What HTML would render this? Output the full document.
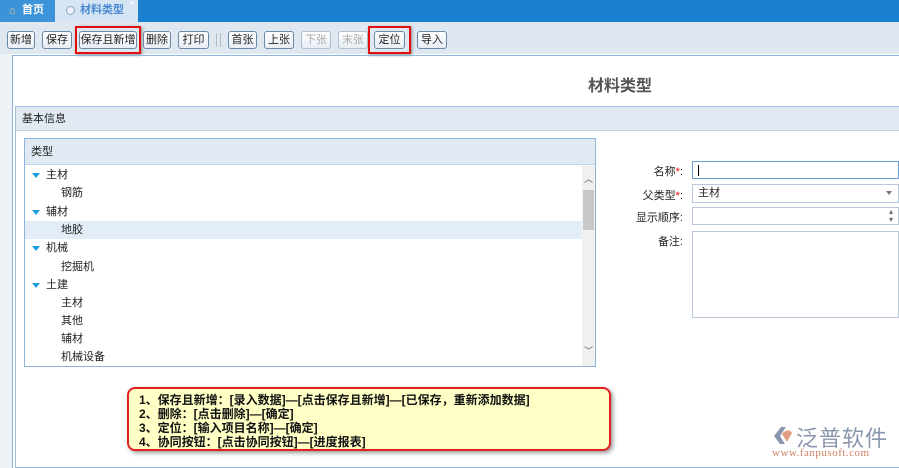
<!DOCTYPE html>
<html><head><meta charset="utf-8"><style>
*{margin:0;padding:0;box-sizing:border-box}
body{width:899px;height:468px;overflow:hidden;background:#fff;font-family:"Liberation Sans","Noto Sans CJK SC",sans-serif;font-size:11px;color:#222;position:relative}
.a{position:absolute}
.tabbar{left:0;top:0;width:899px;height:22px;background:#1a7fcf}
.btn{position:absolute;top:31px;height:18px;border:1px solid #6a8aa8;border-radius:3px;background:linear-gradient(#fff,#e6eef6);font-size:11px;line-height:16px;text-align:center;color:#222}
.dis{color:#aaa;border-color:#b0c0d0}
.red{position:absolute;border:2px solid #e01010;box-shadow:1px 1px 3px #888}
.row{position:absolute;left:25px;width:557px;height:18px;line-height:18px;font-size:11px}
.tri{position:absolute;left:7px;top:7px;width:0;height:0;border-left:4px solid transparent;border-right:4px solid transparent;border-top:5px solid #1a9ee0}
.lbl{position:absolute;right:216px;font-size:11px;text-align:right}
.inp{position:absolute;left:692px;width:207px;border:1px solid #b8c8d8;background:#fff}
</style></head><body>
<div class="a tabbar"></div>
<div class="a" style="left:0;top:0;width:55px;height:22px;background:#3d93d8;color:#fff;font-size:11px;line-height:20px;padding-left:22px;font-weight:bold">首页</div>
<div class="a" style="left:9px;top:5px;font-size:11px;color:#f0d080">⌂</div>
<div class="a" style="left:55px;top:0;width:83px;height:22px;background:#d5e5f4;color:#4a8ad0;font-size:11px;line-height:20px;padding-left:25px;font-weight:bold">材料类型</div>
<div class="a" style="left:66px;top:6px;width:9px;height:9px;border-radius:50%;border:1px solid #8aa;background:#eef"></div>
<div class="a" style="left:129px;top:-2px;color:#fff;font-size:10px">×</div>
<div class="a" style="left:0;top:22px;width:899px;height:32px;background:#dfe8f1"></div>
<div class="btn" style="left:7px;width:28px">新增</div>
<div class="btn" style="left:42px;width:30px">保存</div>
<div class="btn" style="left:79px;width:58px">保存且新增</div>
<div class="btn" style="left:143px;width:28px">删除</div>
<div class="btn" style="left:178px;width:31px">打印</div>
<div class="a" style="left:216px;top:33px;width:1px;height:14px;background:#bbb"></div>
<div class="a" style="left:220px;top:33px;width:1px;height:14px;background:#bbb"></div>
<div class="btn" style="left:228px;width:29px">首张</div>
<div class="btn" style="left:264px;width:30px">上张</div>
<div class="btn dis" style="left:301px;width:30px">下张</div>
<div class="btn dis" style="left:338px;width:30px">末张</div>
<div class="btn" style="left:374px;width:31px">定位</div>
<div class="btn" style="left:417px;width:30px">导入</div>
<div class="red" style="left:75px;top:26px;width:66px;height:28px"></div>
<div class="red" style="left:368px;top:26px;width:43px;height:28px"></div>
<div class="a" style="left:0;top:54px;width:12px;height:414px;background:#eef2f6"></div>
<div class="a" style="left:12px;top:55px;width:887px;height:1px;background:#8ab4dc"></div>
<div class="a" style="left:12px;top:55px;width:1px;height:413px;background:#8ab4dc"></div>
<div class="a" style="left:588px;top:72px;font-size:16px;font-weight:bold;color:#555">材料类型</div>
<div class="a" style="left:15px;top:106px;width:884px;height:362px;border:1px solid #9dc0e0;border-right:none"></div>
<div class="a" style="left:16px;top:107px;width:883px;height:24px;background:#e1eaf3;border-bottom:1px solid #c0d4e6;line-height:24px;padding-left:6px">基本信息</div>
<div class="a" style="left:24px;top:138px;width:572px;height:229px;border:1px solid #8ab4dc"></div>
<div class="a" style="left:25px;top:139px;width:570px;height:26px;background:#e1eaf3;border-bottom:1px solid #c0d4e6;line-height:26px;padding-left:6px">类型</div>
<div class="a" style="left:582px;top:166px;width:13px;height:200px;background:#f0f0f0"></div>
<div class="a" style="left:583px;top:190px;width:11px;height:40px;background:#c8c8c8"></div>
<div class="a" style="left:584px;top:172px;font-size:9px;color:#555">︿</div>
<div class="a" style="left:584px;top:344px;font-size:9px;color:#555">﹀</div>
<div class="row" style="top:221px;background:#e2edf7"></div>
<div class="row" style="top:166px"><span class="tri"></span><span style="margin-left:21px">主材</span></div>
<div class="row" style="top:184px"><span style="margin-left:36px">钢筋</span></div>
<div class="row" style="top:203px"><span class="tri"></span><span style="margin-left:21px">辅材</span></div>
<div class="row" style="top:221px"><span style="margin-left:36px">地胶</span></div>
<div class="row" style="top:239px"><span class="tri"></span><span style="margin-left:21px">机械</span></div>
<div class="row" style="top:258px"><span style="margin-left:36px">挖掘机</span></div>
<div class="row" style="top:276px"><span class="tri"></span><span style="margin-left:21px">土建</span></div>
<div class="row" style="top:294px"><span style="margin-left:36px">主材</span></div>
<div class="row" style="top:312px"><span style="margin-left:36px">其他</span></div>
<div class="row" style="top:330px"><span style="margin-left:36px">辅材</span></div>
<div class="row" style="top:348px"><span style="margin-left:36px">机械设备</span></div>
<div class="lbl" style="top:163px">名称<span style="color:red">*</span>:</div>
<div class="lbl" style="top:187px">父类型<span style="color:red">*</span>:</div>
<div class="lbl" style="top:209px">显示顺序:</div>
<div class="lbl" style="top:233px">备注:</div>
<div class="inp" style="top:161px;height:18px;border-color:#6aa0d8"><div class="a" style="left:5px;top:3px;width:1px;height:11px;background:#000"></div></div>
<div class="inp" style="top:184px;height:19px;padding-left:5px;line-height:17px">主材<span class="a" style="right:6px;top:6px;border-left:3px solid transparent;border-right:3px solid transparent;border-top:4px solid #777"></span></div>
<div class="inp" style="top:207px;height:18px"><span class="a" style="right:5px;top:0;font-size:8px;color:#666;line-height:8px">▴<br>▾</span></div>
<div class="inp" style="top:231px;height:87px"></div>
<div class="a" style="left:127px;top:387px;width:484px;height:64px;background:#ffffc6;border:2px solid #e02020;border-radius:8px;box-shadow:2px 2px 4px #999;padding:4px 0 0 10px;font-size:12px;font-weight:bold;line-height:14px;color:#111">
1、保存且新增：[录入数据]—[点击保存且新增]—[已保存，重新添加数据]<br>2、删除：[点击删除]—[确定]<br>3、定位：[输入项目名称]—[确定]<br>4、协同按钮：[点击协同按钮]—[进度报表]</div>
<div class="a" style="left:772px;top:425px;width:22px;height:20px">
<svg width="22" height="20"><path d="M2 11 L9 2 L14 2 L8 11 L13 19 L8 19 Z" fill="#8a96ad"/><path d="M10 9 Q16 2 20 8 L15 17 Z" fill="#e0a080"/></svg></div>
<div class="a" style="left:796px;top:421px;font-size:22px;color:#8a96ad;letter-spacing:1px">泛普软件</div>
<div class="a" style="left:772px;top:447px;font-size:11px;color:#d08060;font-family:'Liberation Serif',serif;letter-spacing:0.5px">www.fanpusoft.com</div>
</body></html>
